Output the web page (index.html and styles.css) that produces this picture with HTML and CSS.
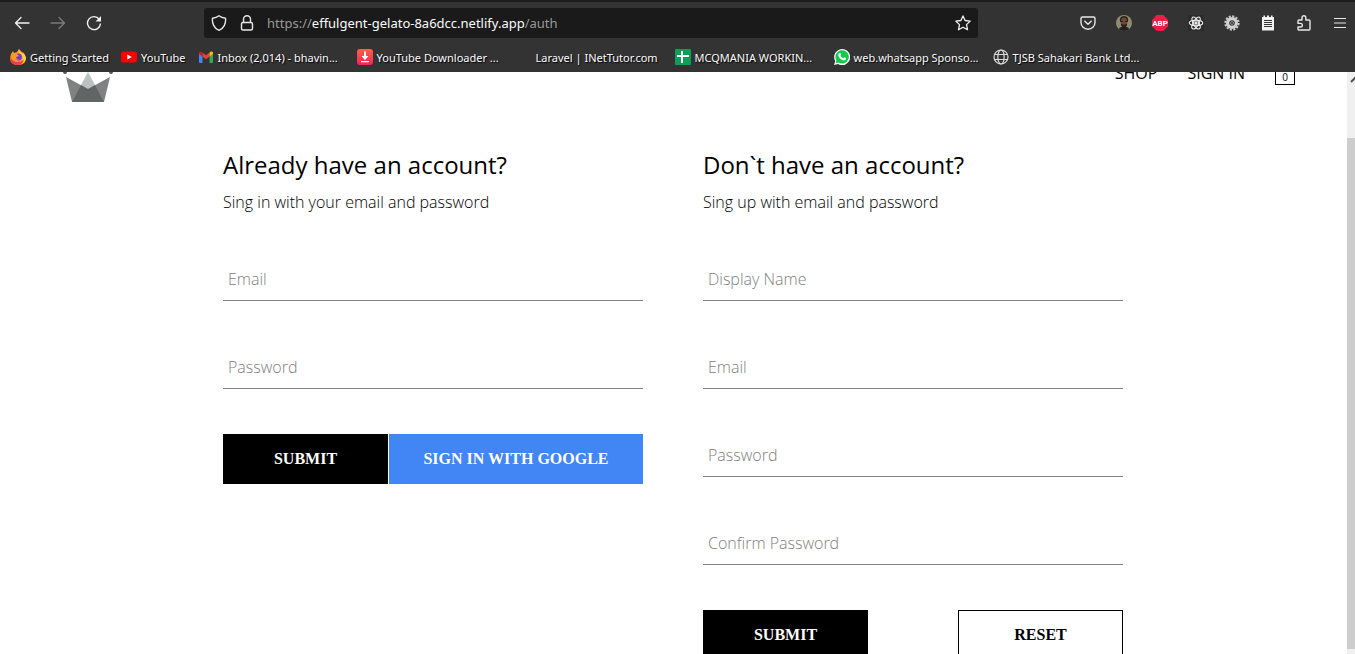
FILE: index.html
```html
<!DOCTYPE html>
<html lang="en">
<head>
<meta charset="utf-8">
<meta name="viewport" content="width=device-width, initial-scale=1">
<title>Crown Clothing</title>
<link rel="stylesheet" href="styles.css">
</head>
<body>
<div class="browser">
  <div class="toolbar">
    <div class="nav-buttons">
      <button class="icon-button" type="button" aria-label="Back"><svg width="16" height="16" viewBox="0 0 16 16" fill="none" stroke="#f2f2f2" stroke-width="1.3" stroke-linecap="round" stroke-linejoin="round"><path d="M15 8H1.5M7 2.5 1.5 8 7 13.5"/></svg></button>
      <button class="icon-button" type="button" aria-label="Forward" disabled><svg width="16" height="16" viewBox="0 0 16 16" fill="none" stroke="#7b7b7b" stroke-width="1.3" stroke-linecap="round" stroke-linejoin="round"><path d="M1 8H14.5M9 2.5 14.5 8 9 13.5"/></svg></button>
      <button class="icon-button" type="button" aria-label="Reload"><svg width="16" height="16" viewBox="0 0 16 16" fill="none" stroke="#f2f2f2" stroke-width="1.4"><path d="M13.3 4.3A6.5 6.5 0 1 0 14.5 8.5"/><path d="M15 1v5.5H9.5z" fill="#f2f2f2" stroke="none"/></svg></button>
    </div>
    <div class="address">
      <svg width="16" height="16" viewBox="0 0 16 16" fill="none" stroke="#e8e8e8" stroke-width="1.4" stroke-linejoin="round"><path d="M8 .8C9.5 2 12 3 14.5 3.3 15.2 8 13 13.3 8 15.3 3 13.3.8 8 1.5 3.3 4 3 6.5 2 8 .8z"/></svg>
      <svg width="16" height="16" viewBox="0 0 16 16" fill="none" stroke="#e8e8e8" stroke-width="1.4" stroke-linejoin="round"><rect x="2.5" y="7.5" width="11" height="7.5" rx="1.5"/><path d="M4.5 7.5V4.3a3.5 3.5 0 0 1 7 0v3.2"/></svg>
      <span class="url">https://<b class="host">effulgent-gelato-8a6dcc.netlify.app</b>/auth</span>
      <svg width="16" height="16" viewBox="0 0 16 16" fill="none" stroke="#f2f2f2" stroke-width="1.3" stroke-linejoin="round"><path d="M8 .9 10.1 5.5 15.2 6.1 11.5 9.6 12.5 14.7 8 12.2 3.5 14.7 4.5 9.6.8 6.1 5.9 5.5z"/></svg>
    </div>
    <div class="extensions">
      <svg width="16" height="16" viewBox="0 0 16 16" fill="none" stroke="#e8e8e8" stroke-width="1.4" stroke-linecap="round" stroke-linejoin="round"><path d="M2.5 2h11a1.5 1.5 0 0 1 1.5 1.5v4a7 6.7 0 0 1-14 0v-4A1.5 1.5 0 0 1 2.5 2zM4.8 6.2 8 9.2l3.2-3"/></svg>
      <svg width="16" height="16" viewBox="0 0 16 16"><clipPath id="face"><circle cx="8" cy="8" r="8"/></clipPath><g clip-path="url(#face)"><path fill="#8f8b70" d="M0 0h16v16H0z"/><path fill="#20201e" d="M2 16q1-4 4-4h4q3 0 4 4zM4 7q-1-6 4-6t4 6z"/><ellipse cx="8" cy="7.3" rx="3.2" ry="4.7" fill="#754834"/><path fill="#29201b" d="M4.8 8.5 6.5 9.5h3l1.7-1Q11 12.5 8 12.5T4.8 8.5zM5 6h2v1H5zm4 0h2v1H9z"/></g></svg>
      <svg width="16" height="16" viewBox="0 0 16 16"><path fill="#ed1e45" d="M4.7 0h6.6L16 4.7v6.6L11.3 16H4.7L0 11.3V4.7z"/><text class="badge-text" x="8" y="11" text-anchor="middle">ABP</text></svg>
      <svg width="16" height="16" viewBox="0 0 16 16" fill="none" stroke="#f0f0f0" stroke-width="1.1"><path fill="#2b2b2b" stroke="none" d="M0 0h16v16H0z"/><ellipse cx="8" cy="8" rx="6.7" ry="2.7"/><ellipse cx="8" cy="8" rx="6.7" ry="2.7" transform="rotate(60 8 8)"/><ellipse cx="8" cy="8" rx="6.7" ry="2.7" transform="rotate(120 8 8)"/><circle cx="8" cy="8" r="1.1" fill="#f0f0f0"/></svg>
      <svg width="16" height="16" viewBox="0 0 16 16" fill="none"><circle cx="8" cy="8" r="6.6" stroke="#c9c9c9" stroke-width="2.2" stroke-dasharray="2.1 1.356"/><circle cx="8" cy="8" r="4.4" stroke="#d2d2d2" stroke-width="3.2"/><circle cx="8" cy="8" r="1.5" stroke="#8d8d8d"/></svg>
      <svg width="16" height="16" viewBox="0 0 16 16"><path fill="#f2f2f2" d="M2 2h1.5V.5H5V2h2V.5h2V2h2V.5h1.5V2H14v13.5H2z"/><path stroke="#333" d="M4 5.5h8M4 7.5h8M4 9.5h8M4 11.5h8"/></svg>
      <svg width="16" height="16" viewBox="0 0 16 16" fill="none" stroke="#e8e8e8" stroke-width="1.4" stroke-linejoin="round"><path d="M2 7V6a1 1 0 0 1 1-1h3V2.7a1.9 1.9 0 0 1 3.8 0V5H13a1 1 0 0 1 1 1v8a1 1 0 0 1-1 1H3a1 1 0 0 1-1-1v-2h2.5a1.8 1.8 0 0 0 0-3.6H2V7"/></svg>
      <svg width="16" height="16" viewBox="0 0 16 16" stroke="#e8e8e8" stroke-width="1.2"><path d="M2 3.5h12M2 8h12M2 12.5h12"/></svg>
    </div>
  </div>
  <nav class="bookmarks" aria-label="Bookmarks">
    <a class="bookmark" href="#"><svg width="16" height="16" viewBox="0 0 16 16"><path fill="#ff9820" d="M1 5 3 2l1 2 3-1 2-3 3 3 2 1 2 5q0 7-8 7T0 9z"/><path fill="#ffd83c" d="M9 0q0 3 3 4l3 2 1 3q-1 5-5 6l2-7-4-4q-1-2 0-4z"/><path fill="#f23a50" d="M0 7q2 6 8 6 4 0 6-3-1 6-7 6Q0 16 0 7z"/><circle cx="8.5" cy="8" r="3.4" fill="#7a36d8"/><path fill="#ff9b2a" d="M3 5h4l2 2-3 1q0 2 3 2-3 2-5-1z"/></svg>Getting Started</a>
    <a class="bookmark" href="#"><svg width="16" height="16" viewBox="0 0 16 16"><rect y="2.5" width="16" height="11" rx="2.5" fill="#f00"/><path fill="#fff" d="m6.3 5.5 4.5 2.5-4.5 2.5z"/></svg>YouTube</a>
    <a class="bookmark wide" href="#"><svg width="16" height="16" viewBox="0 0 16 16"><path fill="#4285f4" d="M1 4.5 4.5 7v7H2q-1 0-1-1z"/><path fill="#34a853" d="M11.5 7 15 4.5V13q0 1-1 1h-2.5z"/><path fill="#ea4335" d="M4.5 3.5 8 6.2l3.5-2.7v4L8 10.2 4.5 7.5z"/><path fill="#c5221f" d="M1 4q0-2 2-1.500l1.500 1v4L1 5z"/><path fill="#fbbc04" d="M15 4q0-2-2-1.500l-1.500 1v4L15 5z"/></svg>Inbox (2,014) - bhavin...</a>
    <a class="bookmark wide" href="#"><svg width="16" height="16" viewBox="0 0 16 16"><defs><linearGradient id="download" x2="0" y2="1"><stop stop-color="#ff6245"/><stop offset="1" stop-color="#f52258"/></linearGradient></defs><rect width="16" height="16" rx="3" fill="url(#download)"/><path fill="#fff" d="M7 2.5h2V7h2.5L8 11 4.5 7H7zM4 12h8v1.2H4z"/></svg>YouTube Downloader ...</a>
    <a class="bookmark wide" href="#"><span class="blank-icon"></span>Laravel | INetTutor.com</a>
    <a class="bookmark wide" href="#"><svg width="16" height="16" viewBox="0 0 16 16"><rect width="16" height="16" rx="1" fill="#109d58"/><path fill="#fff" d="M6 2h2v4h6v2H8v6H6V8H2V6h4z"/></svg>MCQMANIA WORKIN...</a>
    <a class="bookmark wide" href="#"><svg width="16" height="16" viewBox="0 0 16 16"><path fill="#fff" d="M0 16 1.2 12A8 8 0 1 1 4 14.9z"/><path fill="#12c94b" d="m1.5 14.5.9-3.1A6.7 6.7 0 1 1 4.6 13.6z"/><path fill="#fff" d="M5.3 4q.8-.5 1.2.3l.6 1.4-.7 1q1 1.9 2.8 2.6l1-1 1.7.8q.4.3 0 1.2-.6 1.2-2.2 1.1Q6.3 10.8 4.4 6.9 3.9 5 5.3 4z"/></svg>web.whatsapp Sponso...</a>
    <a class="bookmark wide" href="#"><svg width="16" height="16" viewBox="0 0 16 16" fill="none" stroke="#d9d9d9" stroke-width="1.2"><circle cx="8" cy="8" r="7"/><ellipse cx="8" cy="8" rx="3.2" ry="7"/><path d="M1.5 5.5h13M1.5 10.5h13"/></svg>TJSB Sahakari Bank Ltd...</a>
  </nav>
</div>
<div class="viewport">
  <div class="page">
    <header class="header">
      <a class="logo" href="#" aria-label="Home"><svg width="50" height="39" viewBox="0 0 50 39"><circle cx="2" cy="9" r="2" fill="#555"/><circle cx="48" cy="9" r="2" fill="#555"/><path fill="#808282" d="m3 14 22 12L47 14l-6 25H9z"/><path fill="#bdc1c2" d="M25 9 18 22l7 5 7-5z"/><path fill="#626566" d="m18 22 7 4 7-4 9 17H9z"/></svg></a>
      <nav class="links"><a class="link" href="#">SHOP</a><a class="link" href="#">SIGN IN</a><button class="bag" type="button" aria-label="Shopping bag">0</button></nav>
    </header>
    <main class="auth">
      <section class="panel">
        <h2 class="title">Already have an account?</h2>
        <p class="lead">Sing in with your email and password</p>
        <form class="form">
          <input class="field" type="email" placeholder="Email" aria-label="Email">
          <input class="field" type="password" placeholder="Password" aria-label="Password">
          <div class="actions"><button class="button" type="button">SUBMIT</button><button class="button google" type="button">SIGN IN WITH GOOGLE</button></div>
        </form>
      </section>
      <section class="panel">
        <h2 class="title">Don`t have an account?</h2>
        <p class="lead">Sing up with email and password</p>
        <form class="form">
          <input class="field" type="text" placeholder="Display Name" aria-label="Display Name">
          <input class="field" type="email" placeholder="Email" aria-label="Email">
          <input class="field" type="password" placeholder="Password" aria-label="Password">
          <input class="field" type="password" placeholder="Confirm Password" aria-label="Confirm Password">
          <div class="actions spread"><button class="button" type="button">SUBMIT</button><button class="button outline" type="reset">RESET</button></div>
        </form>
      </section>
    </main>
  </div>
  <div class="scrollbar"><svg class="arrow" width="8" height="16" viewBox="0 0 8 16" fill="none" stroke="#505050" stroke-width="2"><path d="m4 10 4-4 4 4"/></svg><div class="thumb"></div></div>
</div>
</body>
</html>
```
FILE: styles.css
```css
* { box-sizing: border-box; }
body {
  margin: 0;
  height: 100vh;
  display: flex;
  flex-direction: column;
  overflow: hidden;
  background: #fff;
  color: #000;
  font-family: "Open Sans", "Noto Sans", sans-serif;
}
button { font: inherit; cursor: pointer; }
a { color: inherit; text-decoration: none; }
svg { display: block; flex: none; }

.browser {
  flex: none;
  background: #333;
  border-top: 2px solid #1c1c1c;
  color: #fbfbfe;
}
.toolbar {
  display: flex;
  align-items: center;
  height: 42px;
  padding: 0 7px 0 14px;
}
.nav-buttons { display: flex; gap: 20px; width: 190px; flex: none; }
.icon-button { padding: 0; border: 0; background: none; }
.address {
  flex: 1;
  max-width: 774px;
  height: 30px;
  display: flex;
  align-items: center;
  gap: 12px;
  padding: 0 7px;
  border-radius: 3px;
  background: #1a1a1a;
}
.url { flex: 1; font-size: 13px; color: #999; white-space: nowrap; font-family: "Noto Sans", sans-serif; }
.host { font-weight: 400; color: #fbfbfe; }
.extensions { display: flex; gap: 20px; margin-left: auto; }
.badge-text { font: 700 8px Roboto, sans-serif; fill: #fff; }
.bookmarks {
  display: flex;
  align-items: center;
  gap: 12px;
  height: 28px;
  padding: 0 10px 2px;
  font: 11px "Noto Sans", sans-serif;
  white-space: nowrap;
}
.bookmark { display: flex; align-items: center; gap: 4px; text-shadow: 1px 1px 1px #000; }
.wide { min-width: 147px; }
.blank-icon { width: 16px; }

.viewport { flex: 1; min-height: 0; display: flex; }
.page { flex: 1; overflow: hidden; }
.header {
  display: flex;
  justify-content: space-between;
  align-items: flex-end;
  height: 30px;
  padding: 0 52px 0 63px;
}
.links { display: flex; align-items: flex-end; gap: 30px; padding-bottom: 17px; font-size: 16px; line-height: 24px; }
.bag {
  width: 20px;
  height: 24px;
  padding: 8px 0 0;
  border: 1px solid #000;
  background: none;
  font-size: 10px;
  line-height: 14px;
  color: #000;
}
.auth { display: flex; justify-content: center; gap: 60px; margin: 44px 0 0; padding-right: 1px; }
.panel { width: 420px; }
.title { margin: 0; font-size: 24px; font-weight: 400; line-height: 38px; }
.lead { margin: 4px 0 0; font-size: 16px; font-weight: 300; line-height: 28px; }
.form { display: flex; flex-direction: column; }
.field {
  width: 100%;
  height: 43px;
  margin: 42px 0 3px;
  padding: 10px 10px 10px 5px;
  border: 0;
  border-bottom: 1px solid #808080;
  border-radius: 0;
  background: #fff;
  font: 300 16px "Open Sans", sans-serif;
}
.field::placeholder { color: #808080; opacity: 1; }
.actions { display: flex; gap: 1px; margin-top: 42px; }
.spread { justify-content: space-between; }
.button {
  min-width: 165px;
  height: 50px;
  padding: 0 32px;
  border: 0;
  background: #000;
  color: #fff;
  font: 700 16px "Liberation Serif", serif;
}
.google { flex: 1; background: #4285f4; }
.outline { border: 1px solid #000; background: #fff; color: #000; }

.scrollbar { width: 8px; flex: none; display: flex; flex-direction: column; background: #f0f0f0; padding-bottom: 5px; }
.arrow { margin-bottom: 50px; }
.thumb { flex: 1; background: #cdcdcd; }
```
